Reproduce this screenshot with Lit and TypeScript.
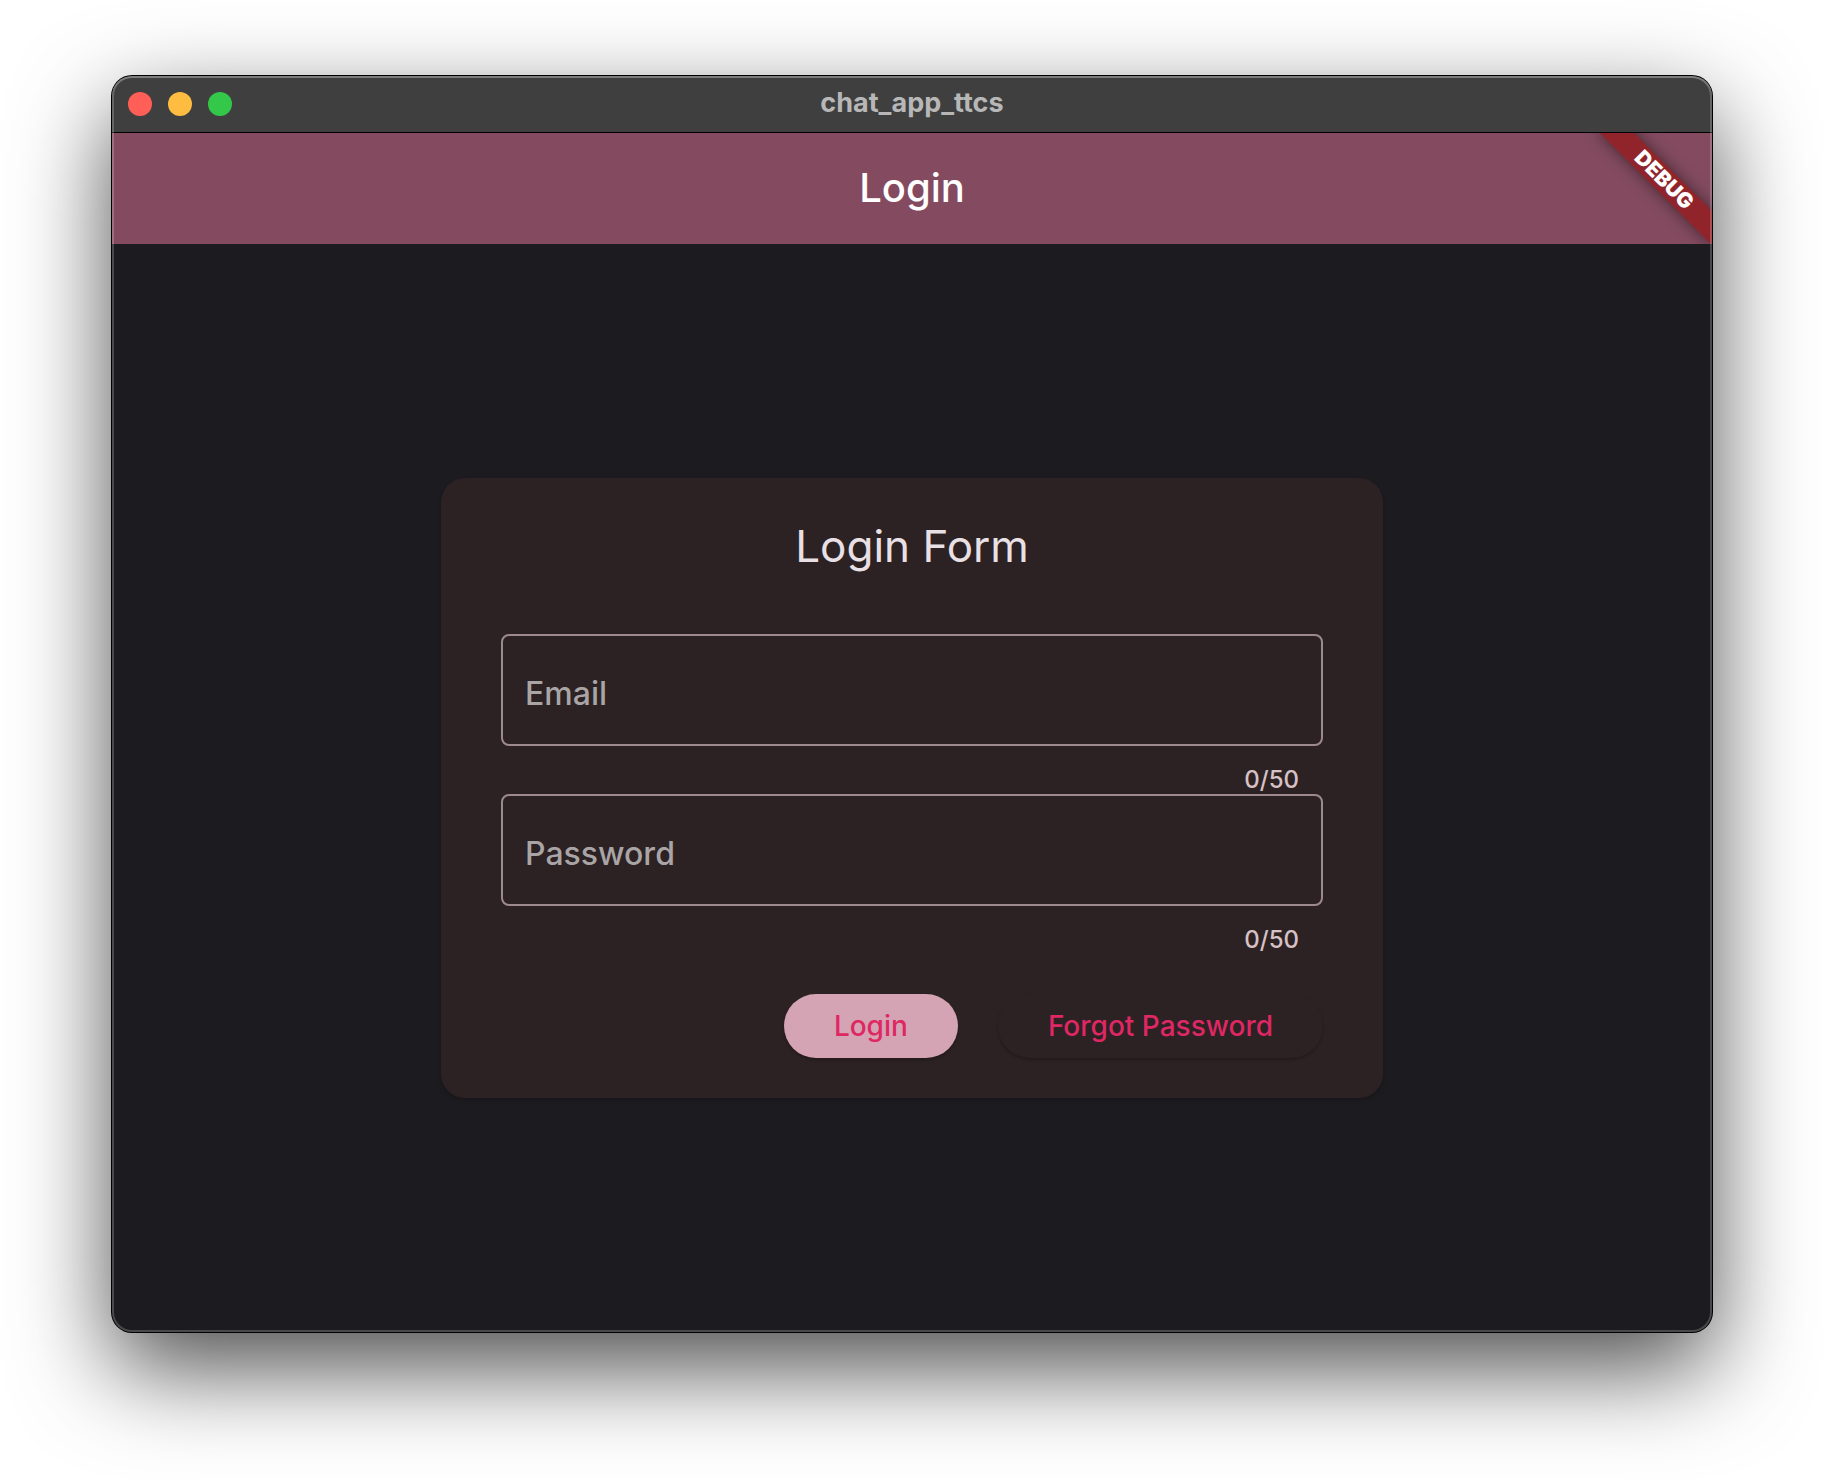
import { LitElement, html, css } from "lit";
import { customElement, property, state } from "lit/decorators.js";

@customElement("form-field")
class FormField extends LitElement {
  @property() label = "";
  @property() type = "text";
  @property({ type: Number }) max = 50;
  @state() private value = "";

  static styles = css`
    :host {
      display: block;
    }
    .box {
      display: grid;
    }
    .input,
    .label {
      grid-area: 1 / 1;
      font-size: 32px;
      line-height: 40px;
    }
    .input {
      box-sizing: border-box;
      width: 100%;
      height: 112px;
      margin: 0;
      padding: 8px 24px 0;
      border: 2px solid #9d8a8e;
      border-radius: 8px;
      outline: none;
      background: transparent;
      color: #ece0e2;
      font-family: inherit;
    }
    .input:focus {
      border-color: #de2763;
    }
    .label {
      align-self: center;
      justify-self: start;
      padding: 8px 24px 0;
      color: #a9a4a5;
      font-weight: 500;
      pointer-events: none;
    }
    .input:not(:placeholder-shown) + .label {
      align-self: start;
      padding-top: 0;
      font-size: 24px;
    }
    .counter {
      padding: 20px 24px 0;
      color: #d6c2c6;
      font-size: 24px;
      font-weight: 500;
      line-height: 28px;
      text-align: right;
    }
  `;

  private onInput(e: Event) {
    this.value = (e.target as HTMLInputElement).value;
  }

  render() {
    return html`
      <div class="box">
        <input
          class="input"
          id="field"
          type=${this.type}
          placeholder=" "
          maxlength=${this.max}
          aria-describedby="counter"
          .value=${this.value}
          @input=${this.onInput}
        />
        <label class="label" for="field">${this.label}</label>
      </div>
      <div class="counter" id="counter">${this.value.length}/${this.max}</div>
    `;
  }
}

@customElement("app-root")
class AppRoot extends LitElement {
  static styles = css`
    :host {
      display: block;
      font-family: Inter, "Liberation Sans", sans-serif;
    }
    .desktop {
      box-sizing: border-box;
      display: flex;
      min-height: 100vh;
      padding: 76px 112px 148px;
      background: #fff;
    }
    .window {
      position: relative;
      display: flex;
      flex: 1;
      flex-direction: column;
      border-radius: 20px;
      background: #1c1b1f;
      box-shadow:
        0 0 0 1px #000,
        0 36px 96px rgba(0, 0, 0, 0.7);
    }
    .window::after {
      content: "";
      position: absolute;
      inset: 0;
      border-radius: 20px;
      box-shadow:
        inset 0 0 0 2px rgba(255, 255, 255, 0.2),
        inset 0 2px 0 rgba(255, 255, 255, 0.16);
      pointer-events: none;
    }
    .titlebar {
      box-sizing: border-box;
      display: grid;
      grid-template-columns: 1fr auto 1fr;
      align-items: center;
      height: 56px;
      padding: 0 16px;
      border-radius: 20px 20px 0 0;
      background: #3f3f3f;
    }
    .lights {
      display: flex;
      gap: 16px;
    }
    .light {
      width: 24px;
      height: 24px;
      padding: 0;
      border: 0;
      border-radius: 50%;
    }
    .close {
      background: #ff5f57;
    }
    .minimise {
      background: #febc40;
    }
    .zoom {
      background: #34c84a;
    }
    .window-name {
      padding-bottom: 2px;
      color: #b7b7b7;
      font-size: 27px;
      font-weight: 700;
      line-height: 32px;
    }
    .appbar {
      position: relative;
      box-sizing: border-box;
      display: flex;
      align-items: center;
      justify-content: center;
      height: 112px;
      padding-bottom: 2px;
      border-top: 1px solid #000;
      background: #844b60;
    }
    .page-title {
      margin: 0;
      color: #fff;
      font-size: 40px;
      font-weight: 500;
      line-height: 48px;
    }
    .ribbon-corner {
      position: absolute;
      top: 0;
      right: 0;
      width: 144px;
      height: 111px;
      overflow: hidden;
    }
    .ribbon {
      position: absolute;
      top: 35px;
      right: -32px;
      width: 160px;
      transform: rotate(45deg);
      background: #91242b;
      box-shadow: 0 0 16px rgba(0, 0, 0, 0.5);
      color: #fff;
      font-size: 21px;
      font-weight: 900;
      line-height: 24px;
      text-align: center;
    }
    .body {
      display: flex;
      flex: 1;
      align-items: center;
      justify-content: center;
      padding: 24px;
    }
    .card {
      box-sizing: border-box;
      width: 100%;
      max-width: 942px;
      padding: 40px 60px;
      border-radius: 24px;
      background: #2c2123;
      box-shadow: 0 2px 4px rgba(0, 0, 0, 0.2);
    }
    .form-title {
      margin: 0 0 60px;
      color: #e8e0e4;
      font-size: 44px;
      font-weight: 400;
      line-height: 56px;
      text-align: center;
    }
    .actions {
      display: flex;
      flex-wrap: wrap;
      justify-content: flex-end;
      gap: 40px;
      margin-top: 40px;
    }
    .button {
      height: 64px;
      padding: 0 50px;
      border: 0;
      border-radius: 32px;
      background: #2c2123;
      box-shadow: 0 2px 3px rgba(0, 0, 0, 0.2);
      color: #de2763;
      font-family: inherit;
      font-size: 28px;
      font-weight: 500;
      line-height: 40px;
      cursor: pointer;
    }
    .primary {
      background: #d4a4b4;
    }
  `;

  render() {
    return html`
      <div class="desktop">
        <div class="window">
          <header class="titlebar">
            <div class="lights">
              <button class="light close" aria-label="Close"></button>
              <button class="light minimise" aria-label="Minimise"></button>
              <button class="light zoom" aria-label="Zoom"></button>
            </div>
            <div class="window-name">chat_app_ttcs</div>
          </header>
          <div class="appbar">
            <h1 class="page-title">Login</h1>
            <div class="ribbon-corner"><div class="ribbon">DEBUG</div></div>
          </div>
          <main class="body">
            <form class="card" @submit=${(e: Event) => e.preventDefault()}>
              <h2 class="form-title">Login Form</h2>
              <form-field label="Email" type="email"></form-field>
              <form-field label="Password" type="password"></form-field>
              <div class="actions">
                <button class="button primary" type="submit">Login</button>
                <button class="button" type="button">Forgot Password</button>
              </div>
            </form>
          </main>
        </div>
      </div>
    `;
  }
}
